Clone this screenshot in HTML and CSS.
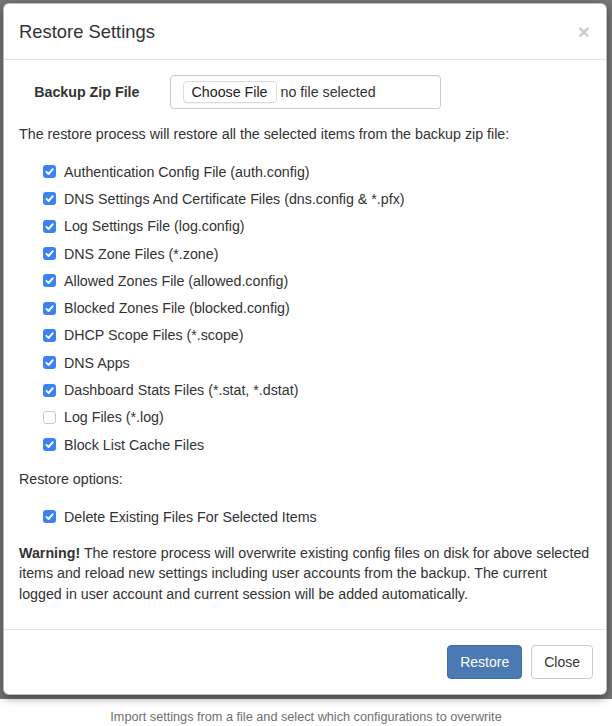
FILE: index.html
```html
<!DOCTYPE html>
<html>
<head>
<meta charset="utf-8">
<link rel="stylesheet" href="styles.css">
</head>
<body>
<div class="backdrop">
  <div class="modal">
    <div class="modal-header">
      <span class="close">&times;</span>
      <h4 class="modal-title">Restore Settings</h4>
    </div>
    <div class="modal-body">
      <div class="form-row">
        <div class="label-col"><label class="control-label">Backup Zip File</label></div>
        <div class="input-col">
          <div class="file-input">
            <span class="file-btn">Choose File</span>
            <span class="file-name">no file selected</span>
          </div>
        </div>
      </div>
      <p class="text">The restore process will restore all the selected items from the backup zip file:</p>
      <div class="check-list">
        <div class="check-row"><span class="cb on"><svg viewBox="0 0 13 13"><path d="M3.4 6.8 L5.6 9 L9.8 4.2"/></svg></span><span>Authentication Config File (auth.config)</span></div>
        <div class="check-row"><span class="cb on"><svg viewBox="0 0 13 13"><path d="M3.4 6.8 L5.6 9 L9.8 4.2"/></svg></span><span>DNS Settings And Certificate Files (dns.config &amp; *.pfx)</span></div>
        <div class="check-row"><span class="cb on"><svg viewBox="0 0 13 13"><path d="M3.4 6.8 L5.6 9 L9.8 4.2"/></svg></span><span>Log Settings File (log.config)</span></div>
        <div class="check-row"><span class="cb on"><svg viewBox="0 0 13 13"><path d="M3.4 6.8 L5.6 9 L9.8 4.2"/></svg></span><span>DNS Zone Files (*.zone)</span></div>
        <div class="check-row"><span class="cb on"><svg viewBox="0 0 13 13"><path d="M3.4 6.8 L5.6 9 L9.8 4.2"/></svg></span><span>Allowed Zones File (allowed.config)</span></div>
        <div class="check-row"><span class="cb on"><svg viewBox="0 0 13 13"><path d="M3.4 6.8 L5.6 9 L9.8 4.2"/></svg></span><span>Blocked Zones File (blocked.config)</span></div>
        <div class="check-row"><span class="cb on"><svg viewBox="0 0 13 13"><path d="M3.4 6.8 L5.6 9 L9.8 4.2"/></svg></span><span>DHCP Scope Files (*.scope)</span></div>
        <div class="check-row"><span class="cb on"><svg viewBox="0 0 13 13"><path d="M3.4 6.8 L5.6 9 L9.8 4.2"/></svg></span><span>DNS Apps</span></div>
        <div class="check-row"><span class="cb on"><svg viewBox="0 0 13 13"><path d="M3.4 6.8 L5.6 9 L9.8 4.2"/></svg></span><span>Dashboard Stats Files (*.stat, *.dstat)</span></div>
        <div class="check-row"><span class="cb off"></span><span>Log Files (*.log)</span></div>
        <div class="check-row"><span class="cb on"><svg viewBox="0 0 13 13"><path d="M3.4 6.8 L5.6 9 L9.8 4.2"/></svg></span><span>Block List Cache Files</span></div>
      </div>
      <p class="text">Restore options:</p>
      <div class="check-list">
        <div class="check-row"><span class="cb on"><svg viewBox="0 0 13 13"><path d="M3.4 6.8 L5.6 9 L9.8 4.2"/></svg></span><span>Delete Existing Files For Selected Items</span></div>
      </div>
      <p class="warning"><b>Warning!</b> The restore process will overwrite existing config files on disk for above selected<br>items and reload new settings including user accounts from the backup. The current<br>logged in user account and current session will be added automatically.</p>
    </div>
    <div class="modal-footer">
      <span class="btn btn-primary">Restore</span>
      <span class="btn btn-default">Close</span>
    </div>
  </div>
</div>
<p class="caption">Import settings from a file and select which configurations to overwrite</p>
</body>
</html>
```

FILE: styles.css
```css
* { box-sizing: border-box; }
html, body { margin: 0; padding: 0; background: #fff; }
body {
  font-family: "Liberation Sans", Arial, Helvetica, sans-serif;
  font-size: 14.25px;
  line-height: 20px;
  color: #333;
}
.backdrop {
  height: 699px;
  background: #777;
  padding: 3px 5px 0 3px;
}
.modal {
  background: #fff;
  border: 1px solid rgba(0,0,0,0.25);
  border-radius: 6px;
  box-shadow: 0 3px 9px rgba(0,0,0,0.45);
}
.modal-header {
  padding: 15px;
  border-bottom: 1px solid #e5e5e5;
}
.modal-title {
  margin: 0;
  font-size: 18.4px;
  font-weight: normal;
  line-height: 25px;
  color: #333;
}
.close {
  float: right;
  font-size: 21px;
  font-weight: bold;
  line-height: 1;
  color: #000;
  opacity: 0.2;
  margin-top: 2px;
  margin-right: 1px;
}
.modal-body { padding: 15px; }
.form-row {
  display: flex;
  margin: 0 -15px 15px;
}
.label-col {
  width: 25%;
  padding: 7px 15px 0;
  text-align: right;
}
.control-label { font-weight: bold; }
.input-col {
  width: 50%;
  padding: 0 15px;
}
.file-input {
  height: 34px;
  border: 1px solid #ccc;
  border-radius: 4px;
  display: flex;
  align-items: center;
  padding: 0 12px;
  gap: 4px;
  box-shadow: inset 0 1px 1px rgba(0,0,0,0.04);
}
.file-btn {
  height: 22px;
  line-height: 20px;
  padding: 0 8px;
  border: 1px solid #dcdcdc;
  border-radius: 4px;
  background: #fff;
  color: #222;
  box-shadow: 0 1px 1px rgba(0,0,0,0.05);
}
.file-name { color: #333; }
.text { margin: 0; }
.check-list {
  margin: 14px 0 11px;
}
.check-row {
  height: 27.3px;
  display: flex;
  align-items: center;
  padding-left: 24px;
  gap: 8px;
}
.cb {
  width: 13px;
  height: 13px;
  border-radius: 3px;
  flex: none;
  display: block;
}
.cb svg { width: 13px; height: 13px; display: block; }
.cb svg path {
  fill: none;
  stroke: #fff;
  stroke-width: 1.9;
  stroke-linecap: round;
  stroke-linejoin: round;
}
.cb.on {
  background: #3b82f6;
  border: none;
}
.cb.off {
  background: #fff;
  border: 1px solid #c8c8c8;
}
.warning {
  margin: 12px 0 10px;
  line-height: 20.5px;
  white-space: nowrap;
}
.warning b { font-weight: bold; }
.modal-footer {
  border-top: 1px solid #e5e5e5;
  padding: 15px 13px 15px 15px;
  display: flex;
  justify-content: flex-end;
  gap: 9px;
}
.btn {
  display: inline-block;
  height: 34px;
  line-height: 20px;
  padding: 6px 12px;
  border: 1px solid transparent;
  border-radius: 4px;
  font-size: 14px;
}
.btn-primary {
  background: #4a79b3;
  border-color: #3f6ea8;
  color: #fff;
}
.btn-default {
  background: #fff;
  border-color: #ccc;
  color: #333;
}
.caption {
  margin: 10px 0 0;
  text-align: center;
  font-size: 12.7px;
  line-height: 16px;
  color: #707070;
}
```
